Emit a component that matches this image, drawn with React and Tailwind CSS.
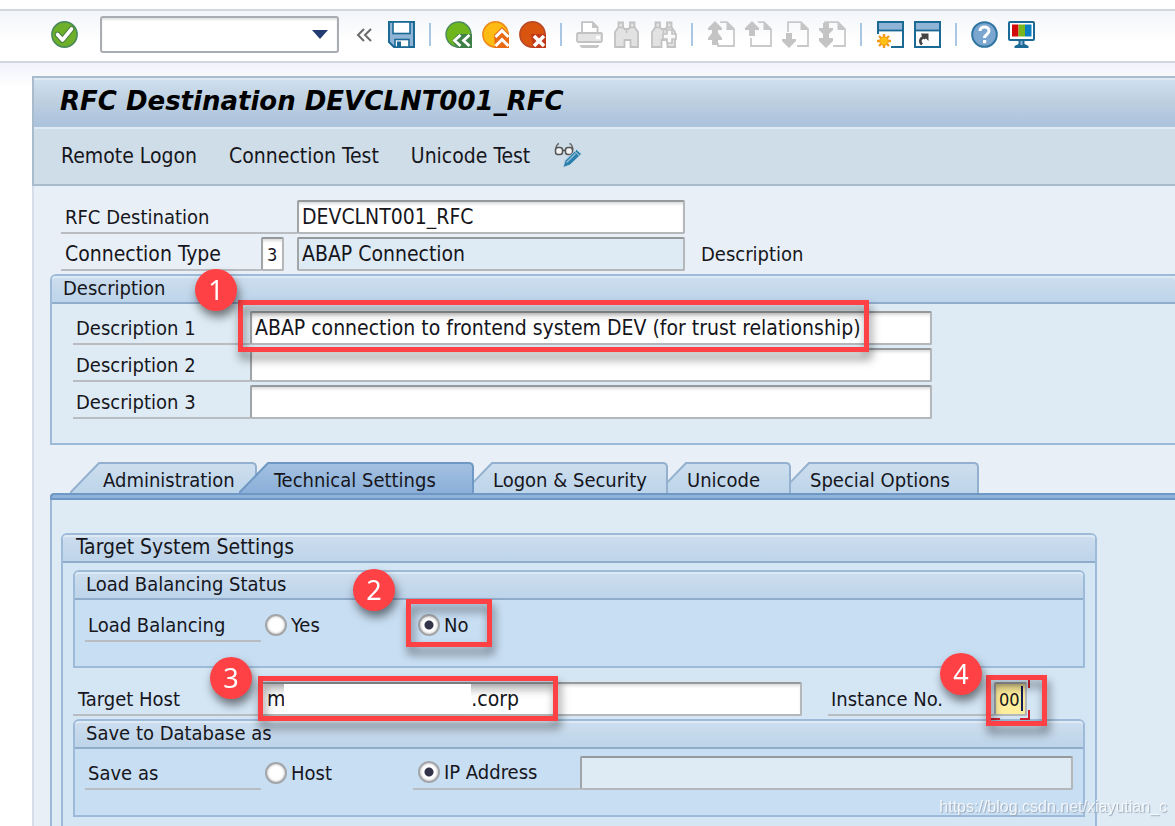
import { useState } from 'react'

/* ---------- toolbar icons ---------- */

function Icon({ children }) {
  return (
    <svg width="27" height="27" viewBox="0 0 27 27" fill="none" aria-hidden="true">
      {children}
    </svg>
  )
}

function CheckIcon() {
  return (
    <Icon>
      <circle cx="13.5" cy="13.5" r="12.6" fill="#6fb02a" stroke="#4a8a5c" strokeWidth="1.6" />
      <path d="M6.5 13.5l5 5.5L20.5 8" stroke="#3f7a3a" strokeWidth="5.6" strokeLinecap="round" strokeLinejoin="round" />
      <path d="M6.5 13.5l5 5.5L20.5 8" stroke="#fff" strokeWidth="3.6" strokeLinecap="round" strokeLinejoin="round" />
    </Icon>
  )
}

function SaveIcon() {
  return (
    <Icon>
      <path d="M1 1h25v25H6l-5-5z" fill="#8fb4d6" stroke="#1b6a96" strokeWidth="2" />
      <rect x="5" y="1" width="17" height="11.5" fill="#fff" stroke="#1b6a96" strokeWidth="1.6" />
      <rect x="7" y="18.5" width="14" height="7.5" fill="#fff" stroke="#1b6a96" strokeWidth="1.6" />
      <rect x="9" y="20.5" width="4" height="5.5" fill="#1b6a96" />
    </Icon>
  )
}

function BackIcon() {
  return (
    <Icon>
      <path d="M26 14A12.5 12.5 0 1 0 13.5 26H26z" fill="#6fb51c" />
      <path d="M7 19.5L13 13H27v14H12z" fill="#3f8048" />
      <path d="M26 14A12.5 12.5 0 1 0 13.5 26" stroke="#4a8a5c" strokeWidth="1.4" />
      <path d="M15.5 14l-6 5.5 6 5.5M24.5 14l-6 5.5 6 5.5" stroke="#fff" strokeWidth="2.8" />
    </Icon>
  )
}

function ExitIcon() {
  return (
    <Icon>
      <circle cx="13.5" cy="13.5" r="12.6" fill="#fdbb14" stroke="#ee8a1c" strokeWidth="1.6" />
      <path d="M12 14l8-8 7 7v14H13z" fill="#ea6a14" />
      <path d="M13.5 16l6.5-6.5 6.5 6.5M13.5 25l6.5-6.5 6.5 6.5" stroke="#fff" strokeWidth="3" />
    </Icon>
  )
}

function CancelIcon() {
  return (
    <Icon>
      <circle cx="13.5" cy="13.5" r="12.6" fill="#d9540f" stroke="#b94a26" strokeWidth="1.6" />
      <path d="M12 13h15v14H14z" fill="#c03a1a" />
      <path d="M15 15l10 10M25 15L15 25" stroke="#fff" strokeWidth="3.6" />
    </Icon>
  )
}

function PrintIcon() {
  return (
    <Icon>
      <path d="M6 11V1.2h10.5l5 5V11" fill="#fff" stroke="#c2c2c2" strokeWidth="1.8" />
      <path d="M16 1v6h6z" fill="#c6c6c6" />
      <rect x="1" y="12" width="25" height="9" rx="1.5" fill="#e3e3e3" stroke="#c2c2c2" strokeWidth="1.8" />
      <path d="M20 16.5h4" stroke="#fff" strokeWidth="3.5" />
      <path d="M4 24h19v1.5l-2 1.5H6l-2-1.5z" fill="#c6c6c6" />
    </Icon>
  )
}

function Binoculars() {
  return (
    <>
      <path
        d="M5.5 1.500h4.500V6l1.500 2h4L17 6V1.500h4.500V6l3.500 5v15h-7.500v-7h-6v7H2V11l3.500-5z"
        fill="#e2e2e2"
        stroke="#c2c2c2"
        strokeWidth="1.8"
      />
      <path d="M5.500 6.500H10M17 6.500h4.500M13.500 8v4" stroke="#c2c2c2" strokeWidth="1.6" />
    </>
  )
}

function FindIcon() {
  return (
    <Icon>
      <Binoculars />
    </Icon>
  )
}

function FindNextIcon() {
  return (
    <Icon>
      <Binoculars />
      <path d="M17 9h5v4h4v5h-4v4h-5v-4h-4v-5h4z" fill="#fafafa" stroke="#c2c2c2" strokeWidth="1.7" />
    </Icon>
  )
}

function PageIcon({ page, arrows }) {
  return (
    <Icon>
      <path d={page} stroke="#c9c9c9" strokeWidth="1.8" />
      <path d="M18.5.5V9H27z" fill="#c6c6c6" />
      <path d={arrows} fill="#c4c4c4" />
    </Icon>
  )
}

function FirstPageIcon() {
  return (
    <PageIcon
      page="M12 1.2h7l7 7V25H10v-3"
      arrows="M7 0l7 7v2h-4v3l4 5v2h-4v5H4v-5H0v-2l4-5V9H0V7z"
    />
  )
}

function PrevPageIcon() {
  return <PageIcon page="M13 1.2h6l7 7V25H6v-8" arrows="M7 0l7 7v2h-4v6H4V9H0V7z" />
}

function NextPageIcon() {
  return <PageIcon page="M6 11V1.2h13l7 7V25H15" arrows="M4 12h6v6h4v2l-7 7-7-7v-2h4z" />
}

function LastPageIcon() {
  return (
    <PageIcon
      page="M6 2V1.2h13l7 7V25H14"
      arrows="M4 2h6v5h4v2l-4 4v4h4v3l-7 7-7-7v-3h4v-4L0 9V7h4z"
    />
  )
}

function NewSessionIcon() {
  return (
    <Icon>
      <path d="M1 13V1h25v25H14" stroke="#1b6a96" strokeWidth="2" />
      <rect x="2" y="2" width="23" height="7" fill="#8fb4d6" />
      <path d="M1 9.5h25" stroke="#1b6a96" strokeWidth="1.8" />
      <path d="M7 13v14M0 20h14M2 15l10 10M12 15L2 25" stroke="#f39a1a" strokeWidth="2.4" />
      <circle cx="7" cy="20" r="4.3" fill="#fdc010" stroke="#f39a1a" />
    </Icon>
  )
}

function ShortcutIcon() {
  return (
    <Icon>
      <rect x="1" y="1" width="25" height="25" fill="#fff" stroke="#1b6a96" strokeWidth="2" />
      <rect x="2" y="2" width="23" height="7" fill="#8fb4d6" />
      <path d="M1 9.5h25" stroke="#1b6a96" strokeWidth="1.8" />
      <path d="M8 23.5c-3-3-2-7 3.5-8" stroke="#444" strokeWidth="2.6" />
      <path d="M7 12.5h7.5V20l-2.5-2.5-2 1-2-3z" fill="#444" />
    </Icon>
  )
}

function HelpIcon() {
  return (
    <Icon>
      <circle cx="13.5" cy="13.5" r="12.3" fill="#7ba6cf" stroke="#2f76a3" strokeWidth="2" />
      <path d="M9 10c0-5.5 9-5.5 9 0 0 3.5-4.5 3.5-4.5 7" stroke="#fff" strokeWidth="3" />
      <rect x="12" y="19" width="3.2" height="3.2" fill="#fff" />
    </Icon>
  )
}

function MonitorIcon() {
  return (
    <Icon>
      <rect x="1" y="1" width="25" height="18" rx="1" fill="#fff" stroke="#1b6a96" strokeWidth="2" />
      <rect x="4" y="3.5" width="6.5" height="12" fill="#d20a0a" />
      <rect x="10.5" y="3.5" width="6.5" height="12" fill="#79b51c" />
      <rect x="17" y="3.5" width="6.5" height="12" fill="#0a7fc4" />
      <path d="M10.5 19h6v4l4 2v2h-14v-2l4-2z" fill="#1b6a96" />
      <path d="M13.5 20v4" stroke="#8fb4d6" strokeWidth="2" />
    </Icon>
  )
}

function DisplayChangeIcon() {
  return (
    <svg width="28" height="26" viewBox="0 0 28 26" fill="none" aria-hidden="true">
      <path d="M1.5 8C2 5 3 2 5 1.500M19 8c-.5-4-1.500-6-3.500-6.500" stroke="#666" strokeWidth="1.4" />
      <rect x="1.500" y="5.500" width="7" height="7" rx="2.500" fill="#f2f2f2" stroke="#555" strokeWidth="1.5" />
      <rect x="11.500" y="5.500" width="7" height="7" rx="2.500" fill="#f2f2f2" stroke="#555" strokeWidth="1.5" />
      <path d="M8.500 9q1.500-1.500 3 0" stroke="#555" strokeWidth="1.5" />
      <path d="M9 25.500l2-7L22.500 7.500 27.500 12 16 23z" fill="#2b7fad" stroke="#cfdde8" strokeWidth=".8" />
      <path d="M12.500 20.500l9-9" stroke="#8cc0dc" strokeWidth="1.5" />
      <path d="M20.500 9l5 4.800" stroke="#cfdde8" strokeWidth="1" />
    </svg>
  )
}

function ToolButton({ label, children }) {
  return (
    <button type="button" aria-label={label} className="block cursor-pointer">
      {children}
    </button>
  )
}

function Separator() {
  return <div className="mx-[14px] h-[23px] w-[2px] bg-[#a9c6e2]" />
}

/* ---------- form parts ---------- */

const fieldTones = {
  edit: 'bg-white shadow-[inset_0_3px_3px_-1px_#dcdcdc]',
  display: 'bg-[#deebf4]',
  focus: 'bg-[#ffee9c] shadow-[inset_0_3px_3px_-1px_#d0c080]',
}

function Field({ className, tone = 'edit', size = 'text-[21px]', ...rest }) {
  return (
    <input
      type="text"
      readOnly={tone === 'display'}
      className={`h-[34px] min-w-0 rounded-[2px] border-2 border-[#b4b8bb] border-t-[#96999c] border-l-[#a2a5a8] outline-none ${fieldTones[tone]} ${size} ${className}`}
      {...rest}
    />
  )
}

const captionStyle = 'block h-[34px] shrink-0 border-b-2 border-[#b9bdc1] leading-[34px] whitespace-nowrap'

function Label({ className, ...rest }) {
  return <label className={`${captionStyle} ${className}`} {...rest} />
}

function Radio({ label, ...rest }) {
  return (
    <label className="flex items-center gap-1 whitespace-nowrap">
      <input
        type="radio"
        className="size-[22px] appearance-none rounded-full border-2 border-[#a3a5a8] bg-white bg-[radial-gradient(circle,#fff_50%,#dadada_72%)] checked:bg-[radial-gradient(circle,#33344a_0_4px,#fff_5px,#fff_50%,#dadada_72%)]"
        {...rest}
      />
      {label}
    </label>
  )
}

function Group({ title, indent = 'pl-[11px]', className, children }) {
  return (
    <section className={`rounded-t-[6px] border-2 border-[#9dbbd8] ${className}`}>
      <h2 className={`h-[28px] rounded-t-[4px] border-b-2 border-[#8faccb] bg-linear-to-b from-[#cddeee] to-[#bdd4ea] leading-[25px] shadow-[inset_0_2px_0_#dde9f5] ${indent}`}>
        {title}
      </h2>
      {children}
    </section>
  )
}

/* ---------- numbered markers ---------- */

function Marker({ className, children }) {
  return (
    <span
      className={`absolute z-20 flex size-[42px] items-center justify-center rounded-full bg-[#fe4144] font-['Noto_Sans',sans-serif] text-[27px] text-white drop-shadow-[2px_6px_5px_rgba(0,0,0,0.5)] ${className}`}
    >
      {children}
    </span>
  )
}

function Frame({ className }) {
  return (
    <span
      className={`pointer-events-none absolute z-10 border-[5px] border-[#fe4144] drop-shadow-[2px_7px_5px_rgba(0,0,0,0.5)] ${className}`}
    />
  )
}

/* Red corner brackets and text cursor of the focused field */
function FocusCorners() {
  return (
    <>
      <span className="absolute top-[4px] right-[4px] h-[25px] w-[2px] bg-[#14205c]" />
      <span className="absolute -top-[3px] -right-[3px] h-[9px] w-[2px] bg-[#d0202c]" />
      <span className="absolute -right-[3px] -bottom-[4px] size-[10px] border-r-2 border-b-2 border-[#d0202c]" />
      <span className="absolute -bottom-[4px] -left-[3px] h-[2px] w-[9px] bg-[#d0202c]" />
    </>
  )
}

/* ---------- tabs ---------- */

const tabs = [
  { name: 'Administration', width: 'w-[157px]', indent: 'pl-[3px]', full: true },
  { name: 'Technical Settings', width: 'w-[205px]', indent: 'pl-[5px]', full: true },
  { name: 'Logon & Security', width: 'w-[175px]' },
  { name: 'Unicode', width: 'w-[104px]' },
  { name: 'Special Options', width: 'w-[169px]' },
]

function Tab({ tab, active, onSelect }) {
  const edge = active ? '#6f98c4' : '#93b0ce'
  const slant = tab.full ? 30 : 19
  return (
    <button
      type="button"
      role="tab"
      aria-selected={active}
      onClick={onSelect}
      className={`flex h-[31px] cursor-pointer ${active ? 'relative z-10 -ml-[18px]' : ''}`}
    >
      <svg width={slant} height="31" viewBox={`${30 - slant} 0 ${slant} 31`} fill="none" className="block shrink-0">
        <defs>
          <linearGradient id={`tab-${tab.name[0]}`} x1="0" y1="0" x2="0" y2="1">
            <stop offset="0" stopColor={active ? '#a3c0e0' : '#cddeee'} />
            <stop offset="1" stopColor={active ? '#8aafd9' : '#bdd4ea'} />
          </linearGradient>
        </defs>
        <path d="M0 31L29 1H31V31z" fill={`url(#tab-${tab.name[0]})`} />
        <path d="M0 31L29 1H31" stroke={edge} strokeWidth="2" />
      </svg>
      <span
        className={`block h-[31px] rounded-tr-[5px] border-t-2 border-r-2 bg-linear-to-b text-left leading-[32px] whitespace-nowrap ${tab.width} ${tab.indent ?? ''} ${
          active ? 'border-[#6f98c4] from-[#a3c0e0] to-[#8aafd9]' : 'border-[#93b0ce] from-[#cddeee] to-[#bdd4ea]'
        }`}
      >
        {tab.name}
      </span>
    </button>
  )
}

export default function App() {
  const [command, setCommand] = useState('')
  const [destination, setDestination] = useState('DEVCLNT001_RFC')
  const [description, setDescription] = useState([
    'ABAP connection to frontend system DEV (for trust relationship)',
    '',
    '',
  ])
  const [activeTab, setActiveTab] = useState('Technical Settings')
  const [balancing, setBalancing] = useState('no')
  const [saveAs, setSaveAs] = useState('ip')
  const [host, setHost] = useState(`m${'\u00a0'.repeat(29)}p.corp`)
  const [instance, setInstance] = useState('00')

  function changeDescription(index, value) {
    setDescription(lines => lines.map((line, i) => (i === index ? value : line)))
  }

  return (
    <div className="flex h-screen flex-col overflow-hidden bg-white font-['DejaVu_Sans_Condensed','Noto_Sans',sans-serif] text-[20px] text-[#16161c]">
      {/* System toolbar */}
      <header className="mt-[9px] flex h-[54px] shrink-0 items-center border-y-2 border-[#d3d8df] bg-linear-to-b from-[#f3f5fa] to-white to-60% pb-[3px] pl-[51px]">
        <ToolButton label="Enter"><CheckIcon /></ToolButton>
        <div className="ml-[22px] flex h-[37px] w-[239px] items-center rounded-[3px] border-2 border-[#a9adb1] bg-white shadow-[inset_0_2px_2px_#e4e4e4]">
          <input
            type="text"
            aria-label="Command"
            value={command}
            onChange={e => setCommand(e.target.value)}
            className="h-full min-w-0 flex-1 px-1 outline-none"
          />
          <button type="button" aria-label="Command history" className="mr-[9px] cursor-pointer">
            <svg width="16" height="9" viewBox="0 0 16 9" aria-hidden="true"><path d="M0 0h16L8 9z" fill="#233a72" /></svg>
          </button>
        </div>
        <button type="button" aria-label="Hide command field" className="mr-[16px] ml-[17px] cursor-pointer">
          <svg width="16" height="14" viewBox="0 0 16 14" fill="none" stroke="#6b6b6b" strokeWidth="2" aria-hidden="true">
            <path d="M8 1L2 7l6 6M15 1L9 7l6 6" />
          </svg>
        </button>
        <ToolButton label="Save"><SaveIcon /></ToolButton>
        <Separator />
        <div className="flex gap-[10px]">
          <ToolButton label="Back"><BackIcon /></ToolButton>
          <ToolButton label="Exit"><ExitIcon /></ToolButton>
          <ToolButton label="Cancel"><CancelIcon /></ToolButton>
        </div>
        <Separator />
        <div className="flex gap-[10px]">
          <ToolButton label="Print"><PrintIcon /></ToolButton>
          <ToolButton label="Find"><FindIcon /></ToolButton>
          <ToolButton label="Find next"><FindNextIcon /></ToolButton>
        </div>
        <Separator />
        <div className="flex gap-[10px] pl-[1px]">
          <ToolButton label="First page"><FirstPageIcon /></ToolButton>
          <ToolButton label="Previous page"><PrevPageIcon /></ToolButton>
          <ToolButton label="Next page"><NextPageIcon /></ToolButton>
          <ToolButton label="Last page"><LastPageIcon /></ToolButton>
        </div>
        <Separator />
        <div className="flex gap-[10px] pl-[1px]">
          <ToolButton label="New session"><NewSessionIcon /></ToolButton>
          <ToolButton label="Create shortcut"><ShortcutIcon /></ToolButton>
        </div>
        <Separator />
        <div className="flex gap-[10px]">
          <ToolButton label="Help"><HelpIcon /></ToolButton>
          <ToolButton label="Customize layout"><MonitorIcon /></ToolButton>
        </div>
      </header>

      <div className="flex grow flex-col bg-linear-to-b from-[#f0f3fa] to-white to-[24px] pt-[13px] pl-8">
        {/* Title and application toolbar */}
        <div className="border-y-2 border-l-2 border-[#a9bccd]">
          <h1 className="h-[51px] border-y-2 border-[#dfeaf3] bg-linear-to-b from-[#cfe0ee] via-[#bdd0e1] via-45% to-[#abc2dc] pl-[26px] font-['DejaVu_Sans','Noto_Sans',sans-serif] text-[26px] leading-[42px] font-bold whitespace-nowrap text-black italic">
            RFC Destination DEVCLNT001_RFC
          </h1>
          <nav className="flex h-[55px] items-center gap-8 bg-[#cfdde8] pl-[27px] text-[21px]">
            <button type="button" className="cursor-pointer">Remote Logon</button>
            <button type="button" className="cursor-pointer">Connection Test</button>
            <button type="button" className="cursor-pointer">Unicode Test</button>
            <button type="button" aria-label="Display / Change" className="-ml-2 cursor-pointer pb-1">
              <DisplayChangeIcon />
            </button>
          </nav>
        </div>

        <main className="grow border-l-2 border-[#d6dfe9] bg-[#e8eff7] pt-[14px] pl-4">
          <div className="flex flex-col gap-[3px] pl-[11px]">
            <div className="flex">
              <Label htmlFor="destination" className="w-[236px] pl-[4px]">RFC Destination</Label>
              <Field id="destination" value={destination} onChange={e => setDestination(e.target.value)} className="w-[388px] px-[3px]" />
            </div>
            <div className="flex">
              <Label htmlFor="type" className="w-[200px] pl-[4px] text-[21px]">Connection Type</Label>
              <Field id="type" defaultValue="3" size="text-[18px]" className="w-[23px] pl-[4px]" />
              <Field aria-label="Connection type text" value="ABAP Connection" tone="display" className="ml-[13px] w-[388px] px-[3px]" />
              <span className="ml-[16px] leading-[34px]">Description</span>
            </div>
          </div>

          <Group title="Description" className="relative mt-[3px] h-[171px] rounded-tr-none border-r-0 bg-[#deebf4]">
            <Marker className="top-[-7px] left-[143px]">1</Marker>
            <div className="mt-[7px] flex flex-col gap-[3px] pl-[21px]">
              {description.map((line, i) => (
                <div key={i} className="relative flex">
                  <Label htmlFor={`description-${i}`} className="w-[177px] pl-[3px]">{`Description ${i + 1}`}</Label>
                  <Field
                    id={`description-${i}`}
                    value={line}
                    onChange={e => changeDescription(i, e.target.value)}
                    className="w-[682px] px-[3px]"
                  />
                  {i === 0 && <Frame className="top-[-11px] left-[165px] h-[52px] w-[631px]" />}
                </div>
              ))}
            </div>
          </Group>

          <div role="tablist" className="mt-[17px] flex pl-[20px]">
            {tabs.map(tab => (
              <Tab key={tab.name} tab={tab} active={tab.name === activeTab} onSelect={() => setActiveTab(tab.name)} />
            ))}
          </div>
          <div className="h-[7px] rounded-tl-[4px] border-y-2 border-l-2 border-[#6f98c4] bg-[#8fb3da]" />

          <div role="tabpanel" className="h-[400px] border-l-2 border-[#9dbbd8] bg-[#deebf5] pt-[33px] pl-[9px]">
            <Group title="Target System Settings" indent="pl-[13px] text-[21px]" className="mr-[78px] h-[360px] bg-[#d4e5f4]">
              <div className="px-[10px] pt-[7px]">
                <Group title="Load Balancing Status" className="h-[98px] bg-[#c8def3]">
                  <div role="radiogroup" aria-labelledby="balancing-label" className="relative flex h-[42px] pt-[8px] pl-[10px]">
                    <span id="balancing-label" className={`${captionStyle} w-[176px] pl-[3px]`}>Load Balancing</span>
                    <div className="ml-[4px] flex h-[34px] w-[153px] items-center">
                      <Radio label="Yes" name="balancing" checked={balancing === 'yes'} onChange={() => setBalancing('yes')} />
                    </div>
                    <div className="flex h-[34px] items-center">
                      <Radio label="No" name="balancing" checked={balancing === 'no'} onChange={() => setBalancing('no')} />
                    </div>
                    <Marker className="top-[-31px] left-[278px]">2</Marker>
                    <Frame className="top-[-1px] left-[331px] h-[48px] w-[86px]" />
                  </div>
                </Group>

                <div className="relative my-[3px] flex pt-[11px]">
                  <Label htmlFor="host" className="w-[186px] pl-[5px]">Target Host</Label>
                  <div className="relative flex">
                    <Field id="host" value={host} onChange={e => setHost(e.target.value)} className="w-[543px] px-[6px]" />
                    <span className="absolute top-[2px] left-[25px] z-20 h-[30px] w-[187px] bg-white" />
                  </div>
                  <Label htmlFor="instance" className="ml-[26px] w-[166px] pl-[3px]">Instance No.</Label>
                  <div className="relative flex">
                    <Field
                      id="instance"
                      value={instance}
                      onChange={e => setInstance(e.target.value)}
                      tone="focus"
                      size="text-[18px]"
                      className="w-[33px] px-[3px]"
                    />
                    <FocusCorners />
                  </div>
                  <Marker className="top-[-14px] left-[137px]">3</Marker>
                  <Frame className="top-[5px] left-[185px] h-[45px] w-[300px]" />
                  <Marker className="top-[-18px] left-[867px]">4</Marker>
                  <Frame className="top-[4px] left-[913px] h-[51px] w-[61px]" />
                </div>

                <Group title="Save to Database as" className="h-[98px] bg-[#c8def3]">
                  <div role="radiogroup" aria-labelledby="save-label" className="flex h-[42px] pt-[7px] pl-[10px]">
                    <span id="save-label" className={`${captionStyle} w-[176px] pl-[3px]`}>Save as</span>
                    <div className="ml-[4px] flex h-[34px] w-[148px] items-center">
                      <Radio label="Host" name="save-as" checked={saveAs === 'host'} onChange={() => setSaveAs('host')} />
                    </div>
                    <div className="flex h-[34px] w-[167px] items-center border-b-2 border-[#b9bdc1] pl-[5px]">
                      <Radio label="IP Address" name="save-as" checked={saveAs === 'ip'} onChange={() => setSaveAs('ip')} />
                    </div>
                    <Field aria-label="IP address" value="" tone="display" className="mr-[10px] flex-1" />
                  </div>
                </Group>
              </div>
            </Group>
          </div>
        </main>
      </div>

      <span className="fixed right-[8px] bottom-[7px] font-['Liberation_Sans',Arial,sans-serif] text-[16px] text-white/80 [text-shadow:1px_1px_1px_#9aaabb]">
        https://blog.csdn.net/xiayutian_c
      </span>
    </div>
  )
}
